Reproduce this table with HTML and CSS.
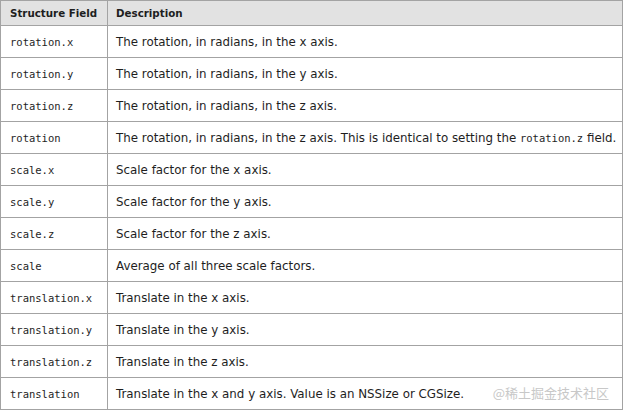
FILE: index.html
```html
<!DOCTYPE html>
<html>
<head>
<meta charset="utf-8">
<link rel="stylesheet" href="styles.css">
</head>
<body>
<div class="wrap">
<table class="fields">
<thead>
<tr><th class="c1">Structure Field</th><th class="c2">Description</th></tr>
</thead>
<tbody>
<tr><td><code>rotation.x</code></td><td>The rotation, in radians, in the x axis.</td></tr>
<tr><td><code>rotation.y</code></td><td>The rotation, in radians, in the y axis.</td></tr>
<tr><td><code>rotation.z</code></td><td>The rotation, in radians, in the z axis.</td></tr>
<tr><td><code>rotation</code></td><td>The rotation, in radians, in the z axis. This is identical to setting the <code>rotation.z</code> field.</td></tr>
<tr><td><code>scale.x</code></td><td>Scale factor for the x axis.</td></tr>
<tr><td><code>scale.y</code></td><td>Scale factor for the y axis.</td></tr>
<tr><td><code>scale.z</code></td><td>Scale factor for the z axis.</td></tr>
<tr><td><code>scale</code></td><td>Average of all three scale factors.</td></tr>
<tr><td><code>translation.x</code></td><td>Translate in the x axis.</td></tr>
<tr><td><code>translation.y</code></td><td>Translate in the y axis.</td></tr>
<tr><td><code>translation.z</code></td><td>Translate in the z axis.</td></tr>
<tr><td><code>translation</code></td><td>Translate in the x and y axis. Value is an NSSize or CGSize.</td></tr>
</tbody>
</table>
<div class="watermark">@稀土掘金技术社区</div>
</div>
</body>
</html>
```
FILE: styles.css
```css
html, body {
  margin: 0;
  padding: 0;
  background: #ffffff;
}
.wrap {
  position: relative;
  width: 623px;
}
.fields {
  border-collapse: collapse;
  width: 623px;
  font-family: "DejaVu Sans", sans-serif;
  font-size: 11.85px;
  color: #1e1e1e;
  table-layout: fixed;
}
.fields th, .fields td {
  border: 1px solid #a3a3a3;
  text-align: left;
  padding: 0 0 0 8px;
  vertical-align: middle;
  white-space: nowrap;
}
.fields th:first-child, .fields td:first-child {
  padding-left: 9px;
}
.fields th {
  background: #e2e2e2;
  font-weight: bold;
  font-size: 10.3px;
  height: 24px;
}
.fields td {
  height: 31px;
}
.c1 { width: 97px; }
code {
  font-family: "DejaVu Sans Mono", monospace;
  font-size: 10.5px;
}
.watermark {
  position: absolute;
  right: 14px;
  bottom: 8px;
  font-family: "Noto Sans CJK SC", sans-serif;
  font-size: 13px;
  color: #c8c8c8;
}
```
